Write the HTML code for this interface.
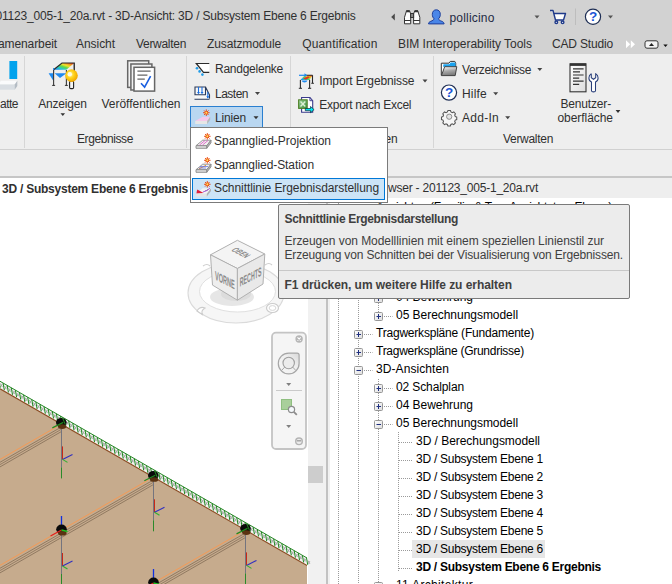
<!DOCTYPE html>
<html lang="de">
<head>
<meta charset="utf-8">
<title>Revit - Schnittlinie Ergebnisdarstellung</title>
<style>
html,body{margin:0;padding:0;}
body{width:672px;height:584px;overflow:hidden;position:relative;background:#fff;font-family:"Liberation Sans",sans-serif;}
.abs{position:absolute;}
.t{position:absolute;white-space:nowrap;line-height:20px;height:20px;}
#titlebar{left:0;top:0;width:672px;height:54px;background:#d2d2d2;}
#ribbon{left:0;top:54px;width:672px;height:95px;background:#eeeeee;border-bottom:1px solid #d0d0d0;}
#band{left:0;top:150px;width:672px;height:26px;background:#eeeeee;border-bottom:2px solid #c6c6c6;}
#browsertitle{left:326px;top:178px;width:346px;height:20px;background:#eeeeee;}
#vscroll{left:308px;top:198px;width:22px;height:386px;background:#f1f1f1;}
#vthumb{left:308px;top:466px;width:14.8px;height:16.7px;background:#cdcdcd;}
#divider{left:326px;top:198px;width:2px;height:386px;background:#c2c2c2;}
#menu{left:190px;top:127px;width:196px;height:74px;background:#fff;border:1px solid #7b7b7b;}
#menuhi{left:192px;top:178px;width:191px;height:20px;background:#cce4f7;border:1px solid #0078d7;}
#linienbtn{left:190px;top:106px;width:71px;height:21px;background:#b9d7f1;border:1px solid #2a7fd0;}
#tooltip{left:278px;top:204px;width:350px;height:93px;background:#ececec;border:1px solid #7a7a7a;border-radius:2px;}
#ttsep{left:279px;top:270px;width:350px;height:1px;background:#c8c8c8;}
#selrow{left:412px;top:540px;width:133px;height:18px;background:#e6e6e6;}
svg{position:absolute;left:0;top:0;}
</style>
</head>
<body>
<div class="abs" id="titlebar"></div>
<div class="abs" id="ribbon"></div>
<div class="abs" id="band"></div>
<div class="abs" id="browsertitle"></div>
<div class="abs" id="vscroll"></div>
<div class="abs" id="vthumb"></div>
<div class="abs" id="divider"></div>
<div class="abs" id="selrow"></div>
<svg id="scene" width="672" height="584" viewBox="0 0 672 584">
<!-- separators -->
<g stroke="#d6d6d6" stroke-width="1">
<line x1="24.5" y1="56" x2="24.5" y2="148"/><line x1="186.5" y1="56" x2="186.5" y2="148"/><line x1="290.5" y1="56" x2="290.5" y2="148"/><line x1="433.5" y1="56" x2="433.5" y2="148"/>
</g>
<polygon points="0,388.85 307,565.59 307,584 0,584" fill="#c6ab8d"/>
<polygon points="0,381.25 307,557.99 307,565.59 0,388.85" fill="#f4f4f2"/>
<path d="M0.4 383.474 l2 3.4 M2.4 384.074 l-2 3.0 M4.5 385.835 l2 3.4 M6.5 386.435 l-2 3.0 M8.6 388.195 l2 3.4 M10.6 388.795 l-2 3.0 M12.7 390.555 l2 3.4 M14.7 391.155 l-2 3.0 M16.8 392.916 l2 3.4 M18.8 393.516 l-2 3.0 M20.9 395.276 l2 3.4 M22.9 395.876 l-2 3.0 M25 397.637 l2 3.4 M27 398.237 l-2 3.0 M29.1 399.997 l2 3.4 M31.1 400.597 l-2 3.0 M33.2 402.357 l2 3.4 M35.2 402.957 l-2 3.0 M37.3 404.718 l2 3.4 M39.3 405.318 l-2 3.0 M41.4 407.078 l2 3.4 M43.4 407.678 l-2 3.0 M45.5 409.438 l2 3.4 M47.5 410.038 l-2 3.0 M49.6 411.799 l2 3.4 M51.6 412.399 l-2 3.0 M53.7 414.159 l2 3.4 M55.7 414.759 l-2 3.0 M57.8 416.519 l2 3.4 M59.8 417.119 l-2 3.0 M61.9 418.88 l2 3.4 M63.9 419.48 l-2 3.0 M66 421.24 l2 3.4 M68 421.84 l-2 3.0 M70.1 423.601 l2 3.4 M72.1 424.201 l-2 3.0 M74.2 425.961 l2 3.4 M76.2 426.561 l-2 3.0 M78.3 428.321 l2 3.4 M80.3 428.921 l-2 3.0 M82.4 430.682 l2 3.4 M84.4 431.282 l-2 3.0 M86.5 433.042 l2 3.4 M88.5 433.642 l-2 3.0 M90.6 435.402 l2 3.4 M92.6 436.002 l-2 3.0 M94.7 437.763 l2 3.4 M96.7 438.363 l-2 3.0 M98.8 440.123 l2 3.4 M100.8 440.723 l-2 3.0 M102.9 442.484 l2 3.4 M104.9 443.084 l-2 3.0 M107 444.844 l2 3.4 M109 445.444 l-2 3.0 M111.1 447.204 l2 3.4 M113.1 447.804 l-2 3.0 M115.2 449.565 l2 3.4 M117.2 450.165 l-2 3.0 M119.3 451.925 l2 3.4 M121.3 452.525 l-2 3.0 M123.4 454.285 l2 3.4 M125.4 454.885 l-2 3.0 M127.5 456.646 l2 3.4 M129.5 457.246 l-2 3.0 M131.6 459.006 l2 3.4 M133.6 459.606 l-2 3.0 M135.7 461.367 l2 3.4 M137.7 461.967 l-2 3.0 M139.8 463.727 l2 3.4 M141.8 464.327 l-2 3.0 M143.9 466.087 l2 3.4 M145.9 466.687 l-2 3.0 M148 468.448 l2 3.4 M150 469.048 l-2 3.0 M152.1 470.808 l2 3.4 M154.1 471.408 l-2 3.0 M156.2 473.168 l2 3.4 M158.2 473.768 l-2 3.0 M160.3 475.529 l2 3.4 M162.3 476.129 l-2 3.0 M164.4 477.889 l2 3.4 M166.4 478.489 l-2 3.0 M168.5 480.249 l2 3.4 M170.5 480.849 l-2 3.0 M172.6 482.61 l2 3.4 M174.6 483.21 l-2 3.0 M176.7 484.97 l2 3.4 M178.7 485.57 l-2 3.0 M180.8 487.331 l2 3.4 M182.8 487.931 l-2 3.0 M184.9 489.691 l2 3.4 M186.9 490.291 l-2 3.0 M189 492.051 l2 3.4 M191 492.651 l-2 3.0 M193.1 494.412 l2 3.4 M195.1 495.012 l-2 3.0 M197.2 496.772 l2 3.4 M199.2 497.372 l-2 3.0 M201.3 499.132 l2 3.4 M203.3 499.732 l-2 3.0 M205.4 501.493 l2 3.4 M207.4 502.093 l-2 3.0 M209.5 503.853 l2 3.4 M211.5 504.453 l-2 3.0 M213.6 506.214 l2 3.4 M215.6 506.814 l-2 3.0 M217.7 508.574 l2 3.4 M219.7 509.174 l-2 3.0 M221.8 510.934 l2 3.4 M223.8 511.534 l-2 3.0 M225.9 513.295 l2 3.4 M227.9 513.895 l-2 3.0 M230 515.655 l2 3.4 M232 516.255 l-2 3.0 M234.1 518.015 l2 3.4 M236.1 518.615 l-2 3.0 M238.2 520.376 l2 3.4 M240.2 520.976 l-2 3.0 M242.3 522.736 l2 3.4 M244.3 523.336 l-2 3.0 M246.4 525.096 l2 3.4 M248.4 525.696 l-2 3.0 M250.5 527.457 l2 3.4 M252.5 528.057 l-2 3.0 M254.6 529.817 l2 3.4 M256.6 530.417 l-2 3.0 M258.7 532.178 l2 3.4 M260.7 532.778 l-2 3.0 M262.8 534.538 l2 3.4 M264.8 535.138 l-2 3.0 M266.9 536.898 l2 3.4 M268.9 537.498 l-2 3.0 M271 539.259 l2 3.4 M273 539.859 l-2 3.0 M275.1 541.619 l2 3.4 M277.1 542.219 l-2 3.0 M279.2 543.979 l2 3.4 M281.2 544.579 l-2 3.0 M283.3 546.34 l2 3.4 M285.3 546.94 l-2 3.0 M287.4 548.7 l2 3.4 M289.4 549.3 l-2 3.0 M291.5 551.061 l2 3.4 M293.5 551.661 l-2 3.0 M295.6 553.421 l2 3.4 M297.6 554.021 l-2 3.0 M299.7 555.781 l2 3.4 M301.7 556.381 l-2 3.0 M303.8 558.142 l2 3.4 M305.8 558.742 l-2 3.0 M307.9 560.502 l2 3.4 M309.9 561.102 l-2 3.0" stroke="#a4a4a4" stroke-width="0.9" fill="none"/>
<path d="M-1 380.674 l1.2 7.1 M3.1 383.035 l1.2 7.1 M7.2 385.395 l1.2 7.1 M11.3 387.755 l1.2 7.1 M15.4 390.116 l1.2 7.1 M19.5 392.476 l1.2 7.1 M23.6 394.837 l1.2 7.1 M27.7 397.197 l1.2 7.1 M31.8 399.557 l1.2 7.1 M35.9 401.918 l1.2 7.1 M40 404.278 l1.2 7.1 M44.1 406.638 l1.2 7.1 M48.2 408.999 l1.2 7.1 M52.3 411.359 l1.2 7.1 M56.4 413.719 l1.2 7.1 M60.5 416.08 l1.2 7.1 M64.6 418.44 l1.2 7.1 M68.7 420.801 l1.2 7.1 M72.8 423.161 l1.2 7.1 M76.9 425.521 l1.2 7.1 M81 427.882 l1.2 7.1 M85.1 430.242 l1.2 7.1 M89.2 432.602 l1.2 7.1 M93.3 434.963 l1.2 7.1 M97.4 437.323 l1.2 7.1 M101.5 439.684 l1.2 7.1 M105.6 442.044 l1.2 7.1 M109.7 444.404 l1.2 7.1 M113.8 446.765 l1.2 7.1 M117.9 449.125 l1.2 7.1 M122 451.485 l1.2 7.1 M126.1 453.846 l1.2 7.1 M130.2 456.206 l1.2 7.1 M134.3 458.567 l1.2 7.1 M138.4 460.927 l1.2 7.1 M142.5 463.287 l1.2 7.1 M146.6 465.648 l1.2 7.1 M150.7 468.008 l1.2 7.1 M154.8 470.368 l1.2 7.1 M158.9 472.729 l1.2 7.1 M163 475.089 l1.2 7.1 M167.1 477.449 l1.2 7.1 M171.2 479.81 l1.2 7.1 M175.3 482.17 l1.2 7.1 M179.4 484.531 l1.2 7.1 M183.5 486.891 l1.2 7.1 M187.6 489.251 l1.2 7.1 M191.7 491.612 l1.2 7.1 M195.8 493.972 l1.2 7.1 M199.9 496.332 l1.2 7.1 M204 498.693 l1.2 7.1 M208.1 501.053 l1.2 7.1 M212.2 503.414 l1.2 7.1 M216.3 505.774 l1.2 7.1 M220.4 508.134 l1.2 7.1 M224.5 510.495 l1.2 7.1 M228.6 512.855 l1.2 7.1 M232.7 515.215 l1.2 7.1 M236.8 517.576 l1.2 7.1 M240.9 519.936 l1.2 7.1 M245 522.296 l1.2 7.1 M249.1 524.657 l1.2 7.1 M253.2 527.017 l1.2 7.1 M257.3 529.378 l1.2 7.1 M261.4 531.738 l1.2 7.1 M265.5 534.098 l1.2 7.1 M269.6 536.459 l1.2 7.1 M273.7 538.819 l1.2 7.1 M277.8 541.179 l1.2 7.1 M281.9 543.54 l1.2 7.1 M286 545.9 l1.2 7.1 M290.1 548.261 l1.2 7.1 M294.2 550.621 l1.2 7.1 M298.3 552.981 l1.2 7.1 M302.4 555.342 l1.2 7.1 M306.5 557.702 l1.2 7.1" stroke="#1f8a1f" stroke-width="1.0" fill="none"/>
<line x1="0" y1="381.25" x2="307" y2="557.99" stroke="#258525" stroke-width="1.0"/>
<line x1="0" y1="388.85" x2="307" y2="565.59" stroke="#8a4a20" stroke-width="1.1"/>
<line x1="56.5" y1="426.878" x2="0" y2="459.406" stroke="#f59a55" stroke-width="1"/>
<line x1="61" y1="427.188" x2="0" y2="462.306" stroke="#7d6852" stroke-width="0.75"/>
<line x1="61" y1="429.488" x2="0" y2="464.606" stroke="#836e58" stroke-width="0.75"/>
<line x1="61" y1="431.788" x2="0" y2="466.906" stroke="#7d6852" stroke-width="0.75"/>
<line x1="148.5" y1="479.878" x2="0" y2="565.37" stroke="#f59a55" stroke-width="1"/>
<line x1="153" y1="480.188" x2="0" y2="568.27" stroke="#7d6852" stroke-width="0.75"/>
<line x1="153" y1="482.488" x2="0" y2="570.57" stroke="#836e58" stroke-width="0.75"/>
<line x1="153" y1="484.788" x2="0" y2="572.87" stroke="#7d6852" stroke-width="0.75"/>
<line x1="240.5" y1="532.879" x2="150" y2="584.979" stroke="#f59a55" stroke-width="1"/>
<line x1="245" y1="533.188" x2="150" y2="587.879" stroke="#7d6852" stroke-width="0.75"/>
<line x1="245" y1="535.488" x2="150" y2="590.179" stroke="#836e58" stroke-width="0.75"/>
<line x1="245" y1="537.788" x2="150" y2="592.479" stroke="#7d6852" stroke-width="0.75"/>
<line x1="148.5" y1="585.879" x2="150" y2="585.015" stroke="#f59a55" stroke-width="1"/>
<line x1="153" y1="586.188" x2="150" y2="587.915" stroke="#7d6852" stroke-width="0.75"/>
<line x1="153" y1="588.488" x2="150" y2="590.215" stroke="#836e58" stroke-width="0.75"/>
<line x1="153" y1="590.788" x2="150" y2="592.515" stroke="#7d6852" stroke-width="0.75"/>
<line x1="61.5" y1="427.4" x2="61.5" y2="467.4" stroke="#74747e" stroke-width="1"/>
<line x1="61.5" y1="467.4" x2="61.5" y2="478.4" stroke="#2a8a2a" stroke-width="1"/>
<line x1="62.5" y1="446.4" x2="62.5" y2="459.4" stroke="#c82818" stroke-width="1"/>
<line x1="62.5" y1="459.4" x2="72.5" y2="454.4" stroke="#3030c0" stroke-width="1.1"/>
<line x1="62.5" y1="459.4" x2="67.5" y2="462.4" stroke="#30b030" stroke-width="1.1"/>
<line x1="153.5" y1="480.3" x2="153.5" y2="520.3" stroke="#74747e" stroke-width="1"/>
<line x1="153.5" y1="520.3" x2="153.5" y2="531.3" stroke="#2a8a2a" stroke-width="1"/>
<line x1="154.5" y1="499.3" x2="154.5" y2="512.3" stroke="#c82818" stroke-width="1"/>
<line x1="154.5" y1="512.3" x2="164.5" y2="507.3" stroke="#3030c0" stroke-width="1.1"/>
<line x1="154.5" y1="512.3" x2="159.5" y2="515.3" stroke="#30b030" stroke-width="1.1"/>
<line x1="245.5" y1="533.4" x2="245.5" y2="573.4" stroke="#74747e" stroke-width="1"/>
<line x1="245.5" y1="573.4" x2="245.5" y2="584.4" stroke="#2a8a2a" stroke-width="1"/>
<line x1="246.5" y1="552.4" x2="246.5" y2="565.4" stroke="#c82818" stroke-width="1"/>
<line x1="246.5" y1="565.4" x2="256.5" y2="560.4" stroke="#3030c0" stroke-width="1.1"/>
<line x1="246.5" y1="565.4" x2="251.5" y2="568.4" stroke="#30b030" stroke-width="1.1"/>
<line x1="61.5" y1="534" x2="61.5" y2="574" stroke="#74747e" stroke-width="1"/>
<line x1="61.5" y1="574" x2="61.5" y2="585" stroke="#2a8a2a" stroke-width="1"/>
<line x1="62.5" y1="553" x2="62.5" y2="566" stroke="#c82818" stroke-width="1"/>
<line x1="62.5" y1="566" x2="72.5" y2="561" stroke="#3030c0" stroke-width="1.1"/>
<line x1="62.5" y1="566" x2="67.5" y2="569" stroke="#30b030" stroke-width="1.1"/>
<line x1="153.5" y1="587" x2="153.5" y2="627" stroke="#74747e" stroke-width="1"/>
<line x1="153.5" y1="627" x2="153.5" y2="638" stroke="#2a8a2a" stroke-width="1"/>
<line x1="154.5" y1="606" x2="154.5" y2="619" stroke="#c82818" stroke-width="1"/>
<line x1="154.5" y1="619" x2="164.5" y2="614" stroke="#3030c0" stroke-width="1.1"/>
<line x1="154.5" y1="619" x2="159.5" y2="622" stroke="#30b030" stroke-width="1.1"/>
<ellipse cx="61.3" cy="422.6" rx="5.3" ry="4.6" fill="#0a0a0a"/>
<ellipse cx="62.1" cy="426.6" rx="4.2" ry="2.3" fill="#5a3312"/>
<line x1="52.3" y1="427.9" x2="63.3" y2="422.4" stroke="#1f8a1f" stroke-width="1.2"/>
<line x1="62.3" y1="417.4" x2="65.3" y2="424.4" stroke="#1f8a1f" stroke-width="1"/>
<ellipse cx="153.3" cy="475.5" rx="5.3" ry="4.6" fill="#0a0a0a"/>
<ellipse cx="154.1" cy="479.5" rx="4.2" ry="2.3" fill="#5a3312"/>
<line x1="144.3" y1="480.8" x2="155.3" y2="475.3" stroke="#1f8a1f" stroke-width="1.2"/>
<line x1="154.3" y1="470.3" x2="157.3" y2="477.3" stroke="#1f8a1f" stroke-width="1"/>
<ellipse cx="245.5" cy="528.6" rx="5.3" ry="4.6" fill="#0a0a0a"/>
<ellipse cx="246.3" cy="532.6" rx="4.2" ry="2.3" fill="#5a3312"/>
<line x1="236.5" y1="533.9" x2="247.5" y2="528.4" stroke="#1f8a1f" stroke-width="1.2"/>
<line x1="246.5" y1="523.4" x2="249.5" y2="530.4" stroke="#1f8a1f" stroke-width="1"/>
<line x1="61.5" y1="516" x2="61.5" y2="530" stroke="#1030e0" stroke-width="1.3"/>
<ellipse cx="61.5" cy="529.2" rx="5.3" ry="4.6" fill="#0a0a0a"/>
<ellipse cx="62.3" cy="533.2" rx="4.2" ry="2.3" fill="#5a3312"/>
<line x1="50.5" y1="536" x2="61.5" y2="530" stroke="#e02020" stroke-width="1.3"/>
<line x1="61.5" y1="530" x2="67.5" y2="531.5" stroke="#20c020" stroke-width="1.3"/>
<line x1="153.5" y1="569" x2="153.5" y2="583" stroke="#1030e0" stroke-width="1.3"/>
<ellipse cx="153.5" cy="582.2" rx="5.3" ry="4.6" fill="#0a0a0a"/>
<ellipse cx="154.3" cy="586.2" rx="4.2" ry="2.3" fill="#5a3312"/>
<line x1="142.5" y1="589" x2="153.5" y2="583" stroke="#e02020" stroke-width="1.3"/>
<line x1="153.5" y1="583" x2="159.5" y2="584.5" stroke="#20c020" stroke-width="1.3"/>
<!-- view cube ring -->
<ellipse cx="236" cy="293" rx="48" ry="30" fill="#f6f6f6" stroke="#dadada" stroke-width="1.1"/>
<ellipse cx="237.5" cy="291.5" rx="38" ry="20.5" fill="#ffffff" stroke="#e0e0e0" stroke-width="1"/>
<ellipse cx="232" cy="297" rx="22" ry="9" fill="#e6e6e6"/>
<ellipse cx="236" cy="294" rx="15" ry="7" fill="#dcdcdc"/>
<path d="M203 266q4-3 7 0M265 265q4-3 7 0" fill="none" stroke="#cfcfcf" stroke-width="1.2"/>
<path d="M197 311q3-5 8-3q-5 3-2 7z" fill="#fff" stroke="#cccccc" stroke-width="1.1"/>
<ellipse cx="272.5" cy="308" rx="6" ry="4.5" fill="#fff" stroke="#cccccc" stroke-width="1.2"/>
<ellipse cx="272.5" cy="308" rx="3.4" ry="2.4" fill="#fff" stroke="#d6d6d6" stroke-width="1"/>
<!-- cube -->
<polygon points="237.4,240.3 264.8,254 237.4,268.5 210.5,254.8" fill="#f4f4f4" stroke="#b0b0b0" stroke-width="1"/>
<polygon points="210.5,254.8 237.4,268.5 237.4,300.2 212.5,285.1" fill="#eeeeee" stroke="#b0b0b0" stroke-width="1"/>
<polygon points="237.4,268.5 264.8,254 263,284 237.4,300.2" fill="#e9e9e9" stroke="#b0b0b0" stroke-width="1"/>
<text transform="matrix(0.8,0.4,-0.8,0.42,230.5,250.6)" font-family="Liberation Sans, sans-serif" font-size="11" font-weight="700" fill="#8a8a8a" textLength="18.5" lengthAdjust="spacingAndGlyphs">OBEN</text>
<text transform="matrix(0.79,0.4,0,1,215,279.5)" font-family="Liberation Sans, sans-serif" font-size="12.5" font-weight="700" fill="#8a8a8a" textLength="25" lengthAdjust="spacingAndGlyphs">VORNE</text>
<text transform="matrix(0.8,-0.42,0,1,239.8,286.8)" font-family="Liberation Sans, sans-serif" font-size="12.5" font-weight="700" fill="#8a8a8a" textLength="27" lengthAdjust="spacingAndGlyphs">RECHTS</text>
<!-- nav bar -->
<defs><linearGradient id="gwh" x1="0" y1="1" x2="1" y2="0"><stop offset="0" stop-color="#f6f6f6"/><stop offset="0.6" stop-color="#efefef"/><stop offset="1" stop-color="#d8d8d8"/></linearGradient></defs>
<rect x="272" y="332.7" width="34" height="116.3" rx="4" fill="#f5f5f5" stroke="#c4c4c4" stroke-width="1.8"/>
<circle cx="299.1" cy="339" r="3.7" fill="#b6b6b6"/>
<path d="M297.5 337.4l3.200 3.200m0-3.200l-3.200 3.200" stroke="#ffffff" stroke-width="1.1"/>
<path d="M288.7 353.100h8.400a2 2 0 0 1 2 2v8.400a10.400 10.400 0 1 1-10.400-10.400z" fill="url(#gwh)" stroke="#a6a6a6" stroke-width="1.2"/>
<path d="M284.6 367.200l-3.300 3.600M292.800 367.200l3.300 3.600" stroke="#a8a8a8" stroke-width="1"/>
<circle cx="288.7" cy="363" r="5.7" fill="#ececec" stroke="#9e9e9e" stroke-width="1.1"/>
<path d="M286.2 383h5l-2.500 3z" fill="#808080"/>
<line x1="276" y1="390.500" x2="302" y2="390.500" stroke="#cacaca" stroke-width="1"/>
<rect x="281.500" y="399.500" width="10" height="10" fill="#a9cf9b" stroke="#8fbf80" stroke-width="1"/>
<circle cx="291.500" cy="409.500" r="3.100" fill="#f4f8fb" stroke="#8c8c8c" stroke-width="1.200"/>
<line x1="293.800" y1="411.800" x2="296.800" y2="414.800" stroke="#8c8c8c" stroke-width="1.800"/>
<path d="M286.2 425h5l-2.500 3z" fill="#808080"/>
<circle cx="299" cy="441.300" r="3.300" fill="#ececec" stroke="#b4b4b4" stroke-width="1.400"/>
<line x1="296.800" y1="440.800" x2="301.200" y2="440.800" stroke="#9c9c9c" stroke-width="1.300"/>

<defs><linearGradient id="gbox" x1="0" y1="0" x2="1" y2="1"><stop offset="0" stop-color="#ffffff"/><stop offset="1" stop-color="#dcdcdc"/></linearGradient></defs>
<line x1="338.5" y1="199" x2="338.5" y2="584" stroke="#9a9a9a" stroke-width="1" stroke-dasharray="1 1"/>
<line x1="358.5" y1="212" x2="358.5" y2="584" stroke="#9a9a9a" stroke-width="1" stroke-dasharray="1 1"/>
<line x1="378.5" y1="289" x2="378.5" y2="320" stroke="#9a9a9a" stroke-width="1" stroke-dasharray="1 1"/>
<line x1="378.5" y1="379" x2="378.5" y2="584" stroke="#9a9a9a" stroke-width="1" stroke-dasharray="1 1"/>
<line x1="398.5" y1="432" x2="398.5" y2="572" stroke="#9a9a9a" stroke-width="1" stroke-dasharray="1 1"/>
<line x1="364" y1="208.5" x2="372.5" y2="208.5" stroke="#9a9a9a" stroke-width="1" stroke-dasharray="1 1"/>
<rect x="354.5" y="204.5" width="8" height="8" rx="1" fill="url(#gbox)" stroke="#969696" stroke-width="1"/>
<line x1="356.5" y1="208.5" x2="361" y2="208.5" stroke="#1f2f7f" stroke-width="1"/>
<line x1="384" y1="298.5" x2="392.5" y2="298.5" stroke="#9a9a9a" stroke-width="1" stroke-dasharray="1 1"/>
<rect x="374.5" y="294.5" width="8" height="8" rx="1" fill="url(#gbox)" stroke="#969696" stroke-width="1"/>
<line x1="376.5" y1="298.5" x2="381" y2="298.5" stroke="#1f2f7f" stroke-width="1"/>
<line x1="378.5" y1="296" x2="378.5" y2="301" stroke="#1f2f7f" stroke-width="1"/>
<line x1="384" y1="316.5" x2="392.5" y2="316.5" stroke="#9a9a9a" stroke-width="1" stroke-dasharray="1 1"/>
<rect x="374.5" y="312.5" width="8" height="8" rx="1" fill="url(#gbox)" stroke="#969696" stroke-width="1"/>
<line x1="376.5" y1="316.5" x2="381" y2="316.5" stroke="#1f2f7f" stroke-width="1"/>
<line x1="378.5" y1="314" x2="378.5" y2="319" stroke="#1f2f7f" stroke-width="1"/>
<line x1="364" y1="334.5" x2="372.5" y2="334.5" stroke="#9a9a9a" stroke-width="1" stroke-dasharray="1 1"/>
<rect x="354.5" y="330.5" width="8" height="8" rx="1" fill="url(#gbox)" stroke="#969696" stroke-width="1"/>
<line x1="356.5" y1="334.5" x2="361" y2="334.5" stroke="#1f2f7f" stroke-width="1"/>
<line x1="358.5" y1="332" x2="358.5" y2="337" stroke="#1f2f7f" stroke-width="1"/>
<line x1="364" y1="352.5" x2="372.5" y2="352.5" stroke="#9a9a9a" stroke-width="1" stroke-dasharray="1 1"/>
<rect x="354.5" y="348.5" width="8" height="8" rx="1" fill="url(#gbox)" stroke="#969696" stroke-width="1"/>
<line x1="356.5" y1="352.5" x2="361" y2="352.5" stroke="#1f2f7f" stroke-width="1"/>
<line x1="358.5" y1="350" x2="358.5" y2="355" stroke="#1f2f7f" stroke-width="1"/>
<line x1="364" y1="370.5" x2="372.5" y2="370.5" stroke="#9a9a9a" stroke-width="1" stroke-dasharray="1 1"/>
<rect x="354.5" y="366.5" width="8" height="8" rx="1" fill="url(#gbox)" stroke="#969696" stroke-width="1"/>
<line x1="356.5" y1="370.5" x2="361" y2="370.5" stroke="#1f2f7f" stroke-width="1"/>
<line x1="384" y1="388.5" x2="392.5" y2="388.5" stroke="#9a9a9a" stroke-width="1" stroke-dasharray="1 1"/>
<rect x="374.5" y="384.5" width="8" height="8" rx="1" fill="url(#gbox)" stroke="#969696" stroke-width="1"/>
<line x1="376.5" y1="388.5" x2="381" y2="388.5" stroke="#1f2f7f" stroke-width="1"/>
<line x1="378.5" y1="386" x2="378.5" y2="391" stroke="#1f2f7f" stroke-width="1"/>
<line x1="384" y1="406.5" x2="392.5" y2="406.5" stroke="#9a9a9a" stroke-width="1" stroke-dasharray="1 1"/>
<rect x="374.5" y="402.5" width="8" height="8" rx="1" fill="url(#gbox)" stroke="#969696" stroke-width="1"/>
<line x1="376.5" y1="406.5" x2="381" y2="406.5" stroke="#1f2f7f" stroke-width="1"/>
<line x1="378.5" y1="404" x2="378.5" y2="409" stroke="#1f2f7f" stroke-width="1"/>
<line x1="384" y1="424.5" x2="392.5" y2="424.5" stroke="#9a9a9a" stroke-width="1" stroke-dasharray="1 1"/>
<rect x="374.5" y="420.5" width="8" height="8" rx="1" fill="url(#gbox)" stroke="#969696" stroke-width="1"/>
<line x1="376.5" y1="424.5" x2="381" y2="424.5" stroke="#1f2f7f" stroke-width="1"/>
<line x1="399" y1="442.5" x2="412.5" y2="442.5" stroke="#9a9a9a" stroke-width="1" stroke-dasharray="1 1"/>
<line x1="399" y1="460.5" x2="412.5" y2="460.5" stroke="#9a9a9a" stroke-width="1" stroke-dasharray="1 1"/>
<line x1="399" y1="478.5" x2="412.5" y2="478.5" stroke="#9a9a9a" stroke-width="1" stroke-dasharray="1 1"/>
<line x1="399" y1="496.5" x2="412.5" y2="496.5" stroke="#9a9a9a" stroke-width="1" stroke-dasharray="1 1"/>
<line x1="399" y1="514.5" x2="412.5" y2="514.5" stroke="#9a9a9a" stroke-width="1" stroke-dasharray="1 1"/>
<line x1="399" y1="532.5" x2="412.5" y2="532.5" stroke="#9a9a9a" stroke-width="1" stroke-dasharray="1 1"/>
<line x1="399" y1="550.5" x2="412.5" y2="550.5" stroke="#9a9a9a" stroke-width="1" stroke-dasharray="1 1"/>
<line x1="399" y1="568.5" x2="412.5" y2="568.5" stroke="#9a9a9a" stroke-width="1" stroke-dasharray="1 1"/>
<line x1="384" y1="586.5" x2="392.5" y2="586.5" stroke="#9a9a9a" stroke-width="1" stroke-dasharray="1 1"/>
<rect x="374.5" y="582.5" width="8" height="8" rx="1" fill="url(#gbox)" stroke="#969696" stroke-width="1"/>
<line x1="376.5" y1="586.5" x2="381" y2="586.5" stroke="#1f2f7f" stroke-width="1"/>
<line x1="378.5" y1="584" x2="378.5" y2="589" stroke="#1f2f7f" stroke-width="1"/>
</svg>
<span class="t" style="left:384.5px;top:129px;font-size:12px;font-weight:400;color:#303030;letter-spacing:-0.280px">en</span>
<span class="t" style="left:2px;top:179px;font-size:12px;font-weight:700;color:#303030;letter-spacing:-0.239px">3D / Subsystem Ebene 6 Ergebnis</span>
<span class="t" style="left:388px;top:178px;font-size:12px;font-weight:400;color:#303030;letter-spacing:-0.218px">wser - 201123_005-1_20a.rvt</span>
<span class="t" style="left:396px;top:287px;font-size:12px;font-weight:400;color:#000000;letter-spacing:-0.033px">04 Bewehrung</span>
<span class="t" style="left:396px;top:305px;font-size:12px;font-weight:400;color:#000000;letter-spacing:-0.037px">05 Berechnungsmodell</span>
<span class="t" style="left:376px;top:323px;font-size:12px;font-weight:400;color:#000000;letter-spacing:-0.209px">Tragwerkspläne (Fundamente)</span>
<span class="t" style="left:376px;top:341px;font-size:12px;font-weight:400;color:#000000;letter-spacing:-0.258px">Tragwerkspläne (Grundrisse)</span>
<span class="t" style="left:376px;top:359px;font-size:12px;font-weight:400;color:#000000;letter-spacing:0.079px">3D-Ansichten</span>
<span class="t" style="left:396px;top:377px;font-size:12px;font-weight:400;color:#000000;letter-spacing:-0.116px">02 Schalplan</span>
<span class="t" style="left:396px;top:395px;font-size:12px;font-weight:400;color:#000000;letter-spacing:-0.033px">04 Bewehrung</span>
<span class="t" style="left:396px;top:413px;font-size:12px;font-weight:400;color:#000000;letter-spacing:-0.037px">05 Berechnungsmodell</span>
<span class="t" style="left:416px;top:431px;font-size:12px;font-weight:400;color:#000000;letter-spacing:-0.035px">3D / Berechungsmodell</span>
<span class="t" style="left:416px;top:449px;font-size:12px;font-weight:400;color:#000000;letter-spacing:-0.261px">3D / Subsystem Ebene 1</span>
<span class="t" style="left:416px;top:467px;font-size:12px;font-weight:400;color:#000000;letter-spacing:-0.261px">3D / Subsystem Ebene 2</span>
<span class="t" style="left:416px;top:485px;font-size:12px;font-weight:400;color:#000000;letter-spacing:-0.261px">3D / Subsystem Ebene 3</span>
<span class="t" style="left:416px;top:503px;font-size:12px;font-weight:400;color:#000000;letter-spacing:-0.261px">3D / Subsystem Ebene 4</span>
<span class="t" style="left:416px;top:521px;font-size:12px;font-weight:400;color:#000000;letter-spacing:-0.261px">3D / Subsystem Ebene 5</span>
<span class="t" style="left:416px;top:539px;font-size:12px;font-weight:400;color:#000000;letter-spacing:-0.261px">3D / Subsystem Ebene 6</span>
<span class="t" style="left:416px;top:557px;font-size:12px;font-weight:700;color:#000000;letter-spacing:-0.271px">3D / Subsystem Ebene 6 Ergebnis</span>
<span class="t" style="left:396px;top:575px;font-size:12px;font-weight:400;color:#000000;letter-spacing:0.323px">11 Architektur</span>
<span class="t" style="left:376px;top:197px;font-size:12px;font-weight:400;color:#000000;letter-spacing:-0.205px">Ansichten (Familie &amp; Typ, Ansichtstyp, Ebene)</span>
<div class="abs" id="linienbtn"></div>
<div class="abs" id="menu"></div>
<div class="abs" id="menuhi"></div>
<div class="abs" id="tooltip"></div>
<div class="abs" id="ttsep"></div>
<svg id="icons" width="672" height="584" viewBox="0 0 672 584">
<defs>
<linearGradient id="rb" x1="0" y1="1" x2="1" y2="0">
<stop offset="0" stop-color="#1a6fe8"/><stop offset="0.25" stop-color="#22c7d8"/><stop offset="0.45" stop-color="#5fd84a"/><stop offset="0.62" stop-color="#f2e22a"/><stop offset="0.8" stop-color="#f08a1e"/><stop offset="1" stop-color="#d8201e"/>
</linearGradient>
<linearGradient id="gfold" x1="0" y1="0" x2="0.25" y2="1"><stop offset="0" stop-color="#ffffff"/><stop offset="0.18" stop-color="#e6e6e6"/><stop offset="0.55" stop-color="#a8a8a8"/><stop offset="1" stop-color="#7c7c7c"/></linearGradient>
<linearGradient id="gwin" x1="0" y1="0" x2="1" y2="1"><stop offset="0" stop-color="#ffffff"/><stop offset="1" stop-color="#dcdcdc"/></linearGradient>
<radialGradient id="bulb" cx="0.4" cy="0.4" r="0.6"><stop offset="0" stop-color="#fff6a0"/><stop offset="0.5" stop-color="#ffd21a"/><stop offset="1" stop-color="#f2a800"/></radialGradient>
<linearGradient id="gxl" x1="0" y1="0" x2="1" y2="1"><stop offset="0" stop-color="#9ad09a"/><stop offset="1" stop-color="#3c8c3c"/></linearGradient>
</defs>
<!-- title bar icons -->
<path d="M394.8 13.4v7.2l-3.6-3.6z" fill="#4a4a4a"/>
<g stroke="#333" stroke-width="1" fill="#fdfdfd">
<path d="M404.5 23.8v-6.5l2-6.5h3l1.2 3v10z"/>
<path d="M419.8 23.8v-6.5l-2-6.5h-3l-1.2 3v10z"/>
<rect x="410.6" y="13.5" width="3" height="4" fill="#888"/>
<path d="M404.500 20.500h6.200M413.600 20.500h6.200" fill="none"/>
<path d="M406.300 10.300h3.400v2h-3.400zM414.600 10.300h3.400v2h-3.400z" fill="#333" stroke="none"/>
</g>
<path d="M436.3 9.8c2.6 0 4 2 4 4.6 0 2-0.8 3.5-1.8 4.4 0.3 1.2 1.5 1.8 3.3 2.5 1.5 0.6 2.3 1.4 2.3 2.6h-15.6c0-1.2 0.8-2 2.3-2.6 1.8-0.7 3-1.3 3.3-2.5-1-0.9-1.8-2.4-1.8-4.4 0-2.6 1.4-4.6 4-4.6z" fill="#4a86e8" stroke="#1f3f9a" stroke-width="1"/>
<path transform="translate(534.5 15.6)" d="M0 0h5l-2.500 3z" fill="#555"/>
<g fill="#fdfdfd" stroke="#1f3a8a" stroke-width="1.4">
<path d="M550 10.5h3l2.5 9.5h8l2-6.5h-11.5" stroke-linejoin="round"/>
<circle cx="556.3" cy="22.3" r="1.3"/><circle cx="562.6" cy="22.3" r="1.3"/>
</g>
<line x1="575.5" y1="8.5" x2="575.5" y2="25" stroke="#bdbdbd" stroke-width="1"/>
<circle cx="593" cy="16.7" r="7.6" fill="#fff" stroke="#1f2f55" stroke-width="1.2"/>
<text x="593" y="21.2" text-anchor="middle" font-family="Liberation Sans, sans-serif" font-weight="700" font-size="13.5" fill="#1a56d6">?</text>
<path transform="translate(608 15.6)" d="M0 0h5l-2.500 3z" fill="#555"/>
<!-- tab row -->
<path d="M626 40.2l4.2 4-4.2 4zM630.8 40.2l4.2 4-4.2 4z" fill="#fff"/>
<rect x="645" y="40.8" width="13" height="7.4" rx="2" fill="#f4f4f4" stroke="#333" stroke-width="1"/>
<path d="M649 46l2.5-3 2.5 3z" fill="#222"/>
<path d="M663.3 44.6h4.4l-2.2 2.4z" fill="#111"/>
<!-- Platte -->
<rect x="9.4" y="61" width="7.8" height="18" fill="#00a2ed"/>
<path d="M-2 84.5l3-3.8h16.3l-2.6 3.8z" fill="#fafbfc"/>
<path d="M-2 84.5h16.7v5.2H-2z" fill="#d9dee3"/>
<path d="M14.7 84.5l2.6-3.8v5.2l-2.6 3.8z" fill="#b4bcc4"/>
<!-- Anzeigen -->
<path d="M53.6 69.7L62 63h12.3l-8 6.7z" fill="url(#rb)"/>
<path d="M53.6 69.7L62 63h12.3v7" fill="none" stroke="#2a2a2a" stroke-width="1.2"/>
<path d="M48.6 73.3h5v8z" fill="#1e8af0"/><path d="M53.6 68v5.3" stroke="#1e8af0" stroke-width="1"/>
<path d="M54.6 73.3h11.8l-6.4 4.6z" fill="#1e8af0"/>
<path d="M53.6 70v14.5M66.4 70v14.5M74.3 63v8" stroke="#3a3a3a" stroke-width="1.1" fill="none"/>
<path d="M51.8 86l1.8-2.2 1.8 2.2zM64.6 86l1.8-2.2 1.8 2.2z" fill="#3a3a3a"/>
<rect x="69.6" y="81" width="4" height="7.6" rx="1.2" fill="#f4f4f4" stroke="#222" stroke-width="1.1"/>
<circle cx="71.5" cy="75.6" r="6.3" fill="url(#bulb)"/>
<circle cx="69.8" cy="74.2" r="2.2" fill="#fffbe0"/>
<path d="M60.5 113.3h4.6l-2.3 2.8z" fill="#333"/>
<!-- Veroeffentlichen -->
<g fill="#f2f2f2" stroke="#666" stroke-width="1.5">
<rect x="127.7" y="60.8" width="21" height="26.6"/>
<rect x="130.9" y="64" width="21" height="26"/>
<rect x="134" y="67.3" width="20.6" height="23.8" fill="#fff"/>
</g>
<path d="M137.4 71.2h13.2M137.4 75.2h10M137.4 79.1h7.4" stroke="#666" stroke-width="1.3"/>
<path d="M141 83.3l3.6 3.8 6-11" stroke="#1a5fe0" stroke-width="1.6" fill="none"/>
<!-- Randgelenke -->
<path d="M196.3 63.5h13l0 8.8h-5.8z" fill="#fff"/>
<path d="M209.3 63.5h-13l7.2 8.8h5.8" fill="none" stroke="#2a2a2a" stroke-width="1.2"/>
<circle cx="197" cy="68.3" r="1.3" fill="#1e9be8"/><circle cx="199.6" cy="71.4" r="1.3" fill="#1e9be8"/><circle cx="202.4" cy="74.6" r="1.3" fill="#1e9be8"/>
<!-- Lasten -->
<path d="M195 87h10.5l4 8v4h-14.5z" fill="#f8f8f8"/>
<path d="M195 87h10.5v7.8h-10.5zM205.5 87l4 8v3.5M194.5 99.3h15" fill="none" stroke="#2a3a5a" stroke-width="1.1"/>
<path d="M198.5 87v6M202 87v6M207.8 92v6" stroke="#1a6fe0" stroke-width="1.1"/>
<path d="M197 92l1.5 2.2 1.5-2.2zM200.5 92l1.5 2.2 1.5-2.2zM206.3 96.2l1.5 2.4 1.5-2.4z" fill="#1a6fe0"/>
<path transform="translate(255 92)" d="M0 0h5l-2.500 3z" fill="#444"/>
<!-- Linien button content -->
<path d="M195.2 121l7.5-4.2h7.5l-3 4.2z" fill="#f6c8ea"/>
<path d="M195.2 121h12v3h-12z" fill="#e6e6e6"/>
<path d="M207.2 121l3-4.2v3l-3 4.2z" fill="#b8b8b8"/>
<g transform="translate(206.3 112.7)"><circle r="2" fill="#ffb020"/><path d="M0-3.3V3.3M-3.3 0H3.3M-2.3-2.3L2.3 2.3M-2.3 2.3L2.300-2.300" stroke="#e8401a" stroke-width="0.9"/><circle r="1" fill="#ffe060"/></g>
<path transform="translate(253.5 116.2)" d="M0 0h5l-2.500 3z" fill="#333"/>
<!-- menu icons -->
<g>
<path d="M196 145.7l6.7-5.5h8.3l-4.2 5.5z" fill="#f0f0f0" stroke="#8a8a8a" stroke-width="0.9"/>
<path d="M196 145.7h10.8v2.6h-10.8z" fill="#dcdcdc" stroke="#8a8a8a" stroke-width="0.9"/>
<path d="M206.8 145.7l4.2-5.5v2.6l-4.2 5.5z" fill="#b0b0b0" stroke="#8a8a8a" stroke-width="0.9"/>
<path d="M199.5 145l5.5-4.5M202.5 145l5.5-4.5" stroke="#e060c8" stroke-width="0.9"/>
<g transform="translate(207.3 136.3)"><circle r="2" fill="#ffb020"/><path d="M0-3.3V3.3M-3.3 0H3.3M-2.3-2.3L2.3 2.3M-2.3 2.3L2.300-2.300" stroke="#e8401a" stroke-width="0.9"/><circle r="1" fill="#ffe060"/></g>
</g>
<g>
<path d="M196 169.7l6.7-5.5h8.3l-4.2 5.5z" fill="#f0f0f0" stroke="#8a8a8a" stroke-width="0.9"/>
<path d="M196 169.7h10.8v2.6h-10.8z" fill="#dcdcdc" stroke="#8a8a8a" stroke-width="0.9"/>
<path d="M206.8 169.7l4.2-5.5v2.6l-4.2 5.5z" fill="#b0b0b0" stroke="#8a8a8a" stroke-width="0.9"/>
<path d="M199 168.8l7-3.4" stroke="#f08a1e" stroke-width="1"/><path d="M200 166.5h8M199 168h7" stroke="#6a7ae0" stroke-width="0.8"/>
<g transform="translate(207.3 160.3)"><circle r="2" fill="#ffb020"/><path d="M0-3.3V3.3M-3.3 0H3.3M-2.3-2.3L2.3 2.3M-2.3 2.3L2.300-2.300" stroke="#e8401a" stroke-width="0.9"/><circle r="1" fill="#ffe060"/></g>
</g>
<g>
<path d="M196 193.7l6.7-5.5h8.3l-4.2 5.5z" fill="#f4f4f4"/>
<path d="M197.2 189.6l6.4 3.3-7.2 0.6z" fill="#e0203a"/>
<path d="M203 192l4-1.5 3-2.3" stroke="#b060e0" stroke-width="1"/>
<path d="M196 193.7h10.8v2.8h-10.8z" fill="#e4e4e4"/>
<path d="M206.8 193.7l4.2-5.5v2.8l-4.2 5.5z" fill="#b0b0b0"/>
<g transform="translate(207.3 184.3)"><circle r="2" fill="#ffb020"/><path d="M0-3.3V3.3M-3.3 0H3.3M-2.3-2.3L2.3 2.3M-2.3 2.3L2.300-2.300" stroke="#e8401a" stroke-width="0.9"/><circle r="1" fill="#ffe060"/></g>
</g>
<!-- Import -->
<path d="M300.4 80l4.4-4.7h7.7l-2.9 4.7z" fill="url(#rb)"/>
<path d="M303 78.6l5-2.4 2 1-4 2.6z" fill="#e03a1e"/>
<path d="M300.4 80v8.2M309.6 80v8.2M312.5 75.3v7.8M304.8 75.3h7.7" stroke="#2a2a2a" stroke-width="1.1" fill="none"/>
<path d="M298.8 88.3h3.2M308 88.3h3.2M311.3 83.3h2.6" stroke="#2a2a2a" stroke-width="1"/>
<path d="M299 75.3h6.5" stroke="#1e8af0" stroke-width="1.2"/><path d="M304.5 73.3l2.8 2-2.8 2z" fill="#1e8af0"/>
<path d="M301.5 80.5a3.2 3.2 0 0 0 6 0z" fill="#1e8af0"/>
<path transform="translate(422.5 79.6)" d="M0 0h5l-2.500 3z" fill="#444"/>
<!-- Export Excel -->
<path d="M301.6 97.5h8.3l2.8 3.2v11.6h-11.1z" fill="#fff" stroke="#3a3a8c" stroke-width="1.1"/>
<path d="M309.9 97.5v3.2h2.8" fill="none" stroke="#3a3a8c" stroke-width="0.9"/>
<rect x="298.600" y="99.800" width="8.600" height="8.600" fill="url(#gxl)" stroke="#4f7f24" stroke-width="1"/>
<path d="M300.500 101.600l4.800 5M305.300 101.600l-4.800 5" stroke="#dcefd4" stroke-width="1.400"/>
<path d="M305.300 108.500h5.200v-2l3.600 3.100-3.600 3.100v-2h-5.200z" fill="#00e5ee" stroke="#0a2a3a" stroke-width="0.7"/>
<!-- Verzeichnisse -->
<path d="M441.300 75.200v-12h7.600l1.400-1.800h4.500l0.900 1.800v4" fill="#ffffff" stroke="#333" stroke-width="1"/>
<path d="M443 66.800l0.500-2.600h5.800l1.300-1.600h4.900v4.200z" fill="#1aa3f0"/>
<path d="M441.400 75.600l3.300-8.900h12.100l-1.600 8.900z" fill="url(#gfold)" stroke="#333" stroke-width="0.900"/>
<path transform="translate(537.3 68)" d="M0 0h5l-2.500 3z" fill="#444"/>
<!-- Hilfe -->
<circle cx="449" cy="92.6" r="7.6" fill="#fff" stroke="#1f2f55" stroke-width="1.2"/>
<text x="449" y="97.2" text-anchor="middle" font-family="Liberation Sans, sans-serif" font-weight="700" font-size="13.5" fill="#1a56d6">?</text>
<path transform="translate(493.2 92.2)" d="M0 0h5l-2.500 3z" fill="#444"/>
<!-- Add-In gear -->
<g transform="translate(449.2 116.7) scale(0.82)">
<path d="M-1.5-7.6h3l0.6 1.8 1.7 0.8 1.8-0.8 2 2.2-0.9 1.7 0.7 1.7 1.8 0.7v3l-1.8 0.6-0.7 1.7 0.9 1.8-2.1 2.1-1.8-0.9-1.7 0.7-0.6 1.8h-3l-0.6-1.8-1.7-0.7-1.8 0.9-2.1-2.1 0.9-1.8-0.7-1.7-1.8-0.6v-3l1.8-0.7 0.7-1.7-0.9-1.7 2.1-2.2 1.8 0.8 1.7-0.8z" fill="#f6f6f6" stroke="#555" stroke-width="1.25"/>
<circle r="3.2" fill="#e4e4e4" stroke="#8a8a8a" stroke-width="1.2"/>
</g>
<path transform="translate(505.2 116.2)" d="M0 0h5l-2.500 3z" fill="#444"/>
<!-- Benutzeroberflaeche -->
<rect x="570" y="63.8" width="16" height="28" fill="url(#gwin)" stroke="#333" stroke-width="1.1"/>
<rect x="570" y="63.5" width="16" height="2.4" fill="#333"/>
<path d="M573 68.9h10.6M573 71.9h7M573 75h10.6M573 78.1h6.2M573 81.2h10.6M573 84.4h6.2" stroke="#333" stroke-width="1.2"/>
<path d="M591.300 73.800v4l2.200 1.500 2.200-1.500v-4c1.700 0.900 2.400 2.500 2.400 4.200 0 1.900-1.100 3.400-2.600 4.100v8.700c0 0.800-0.900 1.100-2 1.100s-2-0.300-2-1.100v-8.700c-1.500-0.700-2.600-2.200-2.600-4.100 0-1.700 0.700-3.300 2.400-4.200z" fill="#fff" stroke="#2a3f7a" stroke-width="1.050"/>
<path d="M615.6 110h4.8l-2.4 3z" fill="#333"/>

</svg>
<span class="t" style="left:-4.5px;top:5.5px;font-size:12px;font-weight:400;color:#303030;letter-spacing:-0.195px">01123_005-1_20a.rvt - 3D-Ansicht: 3D / Subsystem Ebene 6 Ergebnis</span>
<span class="t" style="left:449.5px;top:7.5px;font-size:12px;font-weight:400;color:#1f2a44;letter-spacing:0.182px">pollicino</span>
<span class="t" style="left:-2px;top:34px;font-size:12px;font-weight:400;color:#303030;letter-spacing:-0.105px">amenarbeit</span>
<span class="t" style="left:76px;top:34px;font-size:12px;font-weight:400;color:#303030;letter-spacing:-0.051px">Ansicht</span>
<span class="t" style="left:136px;top:34px;font-size:12px;font-weight:400;color:#303030;letter-spacing:-0.300px">Verwalten</span>
<span class="t" style="left:207px;top:34px;font-size:12px;font-weight:400;color:#303030;letter-spacing:-0.115px">Zusatzmodule</span>
<span class="t" style="left:302.3px;top:34px;font-size:12px;font-weight:400;color:#303030;letter-spacing:0.129px">Quantification</span>
<span class="t" style="left:398px;top:34px;font-size:12px;font-weight:400;color:#303030;letter-spacing:-0.020px">BIM Interoperability Tools</span>
<span class="t" style="left:552px;top:34px;font-size:12px;font-weight:400;color:#303030;letter-spacing:-0.170px">CAD Studio</span>
<span class="t" style="left:0px;top:93.5px;font-size:12px;font-weight:400;color:#303030;letter-spacing:-0.504px">atte</span>
<span class="t" style="left:38.3px;top:93.5px;font-size:12px;font-weight:400;color:#303030;letter-spacing:-0.218px">Anzeigen</span>
<span class="t" style="left:101.4px;top:93.5px;font-size:12px;font-weight:400;color:#303030;letter-spacing:-0.005px">Veröffentlichen</span>
<span class="t" style="left:77px;top:129px;font-size:12px;font-weight:400;color:#303030;letter-spacing:-0.405px">Ergebnisse</span>
<span class="t" style="left:215px;top:59px;font-size:12px;font-weight:400;color:#303030;letter-spacing:-0.249px">Randgelenke</span>
<span class="t" style="left:215px;top:84px;font-size:12px;font-weight:400;color:#303030;letter-spacing:-0.505px">Lasten</span>
<span class="t" style="left:215px;top:108px;font-size:12px;font-weight:400;color:#303030;letter-spacing:-0.172px">Linien</span>
<span class="t" style="left:319.3px;top:71px;font-size:12px;font-weight:400;color:#303030;letter-spacing:-0.141px">Import Ergebnisse</span>
<span class="t" style="left:319.3px;top:95px;font-size:12px;font-weight:400;color:#303030;letter-spacing:-0.283px">Export nach Excel</span>
<span class="t" style="left:462px;top:60px;font-size:12px;font-weight:400;color:#303030;letter-spacing:-0.388px">Verzeichnisse</span>
<span class="t" style="left:462px;top:84px;font-size:12px;font-weight:400;color:#303030;letter-spacing:0.197px">Hilfe</span>
<span class="t" style="left:462px;top:108px;font-size:12px;font-weight:400;color:#303030;letter-spacing:0.273px">Add-In</span>
<span class="t" style="left:560.5px;top:93.5px;font-size:12px;font-weight:400;color:#303030;letter-spacing:-0.170px">Benutzer-</span>
<span class="t" style="left:557.5px;top:108px;font-size:12px;font-weight:400;color:#303030;letter-spacing:-0.055px">oberfläche</span>
<span class="t" style="left:503px;top:129px;font-size:12px;font-weight:400;color:#303030;letter-spacing:-0.300px">Verwalten</span>
<span class="t" style="left:214px;top:131px;font-size:12px;font-weight:400;color:#303030;letter-spacing:-0.020px">Spannglied-Projektion</span>
<span class="t" style="left:214px;top:155px;font-size:12px;font-weight:400;color:#303030;letter-spacing:-0.079px">Spannglied-Station</span>
<span class="t" style="left:214px;top:178px;font-size:12px;font-weight:400;color:#303030;letter-spacing:-0.076px">Schnittlinie Ergebnisdarstellung</span>
<span class="t" style="left:284.5px;top:209px;font-size:12px;font-weight:700;color:#404040;letter-spacing:-0.329px">Schnittlinie Ergebnisdarstellung</span>
<span class="t" style="left:284.5px;top:231px;font-size:12px;font-weight:400;color:#404040;letter-spacing:-0.055px">Erzeugen von Modelllinien mit einem speziellen Linienstil zur</span>
<span class="t" style="left:284.5px;top:245px;font-size:12px;font-weight:400;color:#404040;letter-spacing:-0.151px">Erzeugung von Schnitten bei der Visualisierung von Ergebnissen.</span>
<span class="t" style="left:284.5px;top:275px;font-size:12px;font-weight:700;color:#404040;letter-spacing:-0.048px">F1 drücken, um weitere Hilfe zu erhalten</span>
</body>
</html>
